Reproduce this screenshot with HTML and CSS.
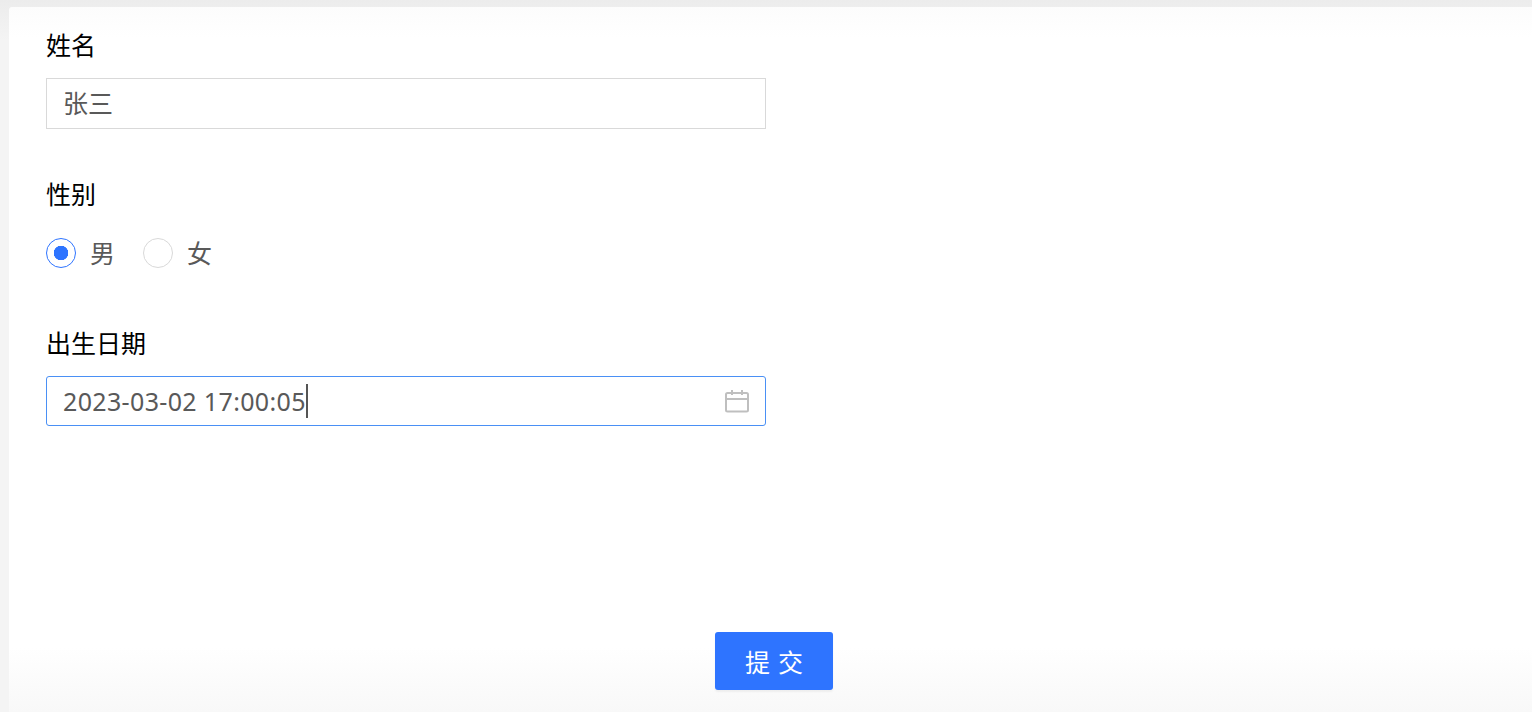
FILE: index.html
```html
<!DOCTYPE html>
<html lang="zh-CN">
<head>
    <meta charset="UTF-8">
    <meta name="viewport" content="width=device-width, initial-scale=1.0">
    <title>表单</title>
    <link rel="stylesheet" href="styles.css">
</head>
<body>
<div class="card">
    <div class="form">
        <div class="field">
            <div class="label">姓名</div>
            <div class="input input-name">张三</div>
        </div>
        <div class="field field-radio">
            <div class="label">性别</div>
            <div class="radios">
                <div class="radio radio-on"><span class="dot"></span><span class="radio-text">男</span></div>
                <div class="radio"><span class="dot"></span><span class="radio-text">女</span></div>
            </div>
        </div>
        <div class="field field-date">
            <div class="label">出生日期</div>
            <div class="input input-focus">
                <span class="value">2023-03-02 17:00:05</span><span class="caret"></span>
                <svg class="cal" width="24" height="24" viewBox="0 0 24 24" fill="none" stroke="#bfbfbf" stroke-width="2">
                    <rect x="1" y="4" width="22" height="18.5" rx="1.5"/>
                    <path d="M1 10h22M7 1v5M17 1v5"/>
                </svg>
            </div>
        </div>
    </div>
    <div class="footer">
        <button class="submit">提交</button>
    </div>
</div>
</body>
</html>
```

FILE: styles.css
```css
* {
    box-sizing: border-box;
}
html, body {
    height: 100%;
}
body {
    margin: 0;
    padding: 7px 0 0 9px;
    overflow: hidden;
    background: linear-gradient(#ececec, #f4f4f4 40px);
    font-family: "Noto Sans", "Noto Sans CJK SC", sans-serif;
    font-size: 25px;
}
.card {
    height: 705px;
    display: flex;
    flex-direction: column;
    background: linear-gradient(#fcfcfc, #fff 30px);
    border-top-left-radius: 3px;
}
.form {
    flex: 1;
    padding: 21px 0 0 37px;
}
.label {
    height: 34px;
    line-height: 34px;
    color: #000;
}
.input {
    width: 720px;
    height: 51px;
    margin-top: 16px;
    padding: 0 17px 0 16px;
    display: flex;
    align-items: center;
    border: 1px solid #d9d9d9;
    color: #595959;
}
.input-name {
    padding-bottom: 3px;
}
.field-radio {
    margin-top: 48px;
}
.radios {
    display: flex;
    gap: 28px;
    margin-top: 27px;
    color: #595959;
}
.radio {
    display: flex;
    align-items: center;
    gap: 14px;
    height: 30px;
}
.radio-text {
    margin-bottom: 3px;
}
.dot {
    width: 30px;
    height: 30px;
    border: 1px solid #d9d9d9;
    border-radius: 50%;
}
.radio-on .dot {
    border-color: #2e74ff;
    background: radial-gradient(circle, #2e74ff 0 7px, #fff 7.5px);
}
.field-date {
    margin-top: 58px;
}
.input-focus {
    height: 50px;
    border-color: #4a90f5;
    border-radius: 3px;
}
.value {
    letter-spacing: 0.35px;
}
.caret {
    width: 2px;
    height: 34px;
    background: #555;
}
.cal {
    margin-left: auto;
    margin-right: -1px;
}
.footer {
    height: 80px;
    padding: 0 0 22px 7px;
    display: flex;
    justify-content: center;
    align-items: flex-end;
    background: linear-gradient(#fff 20%, #f8f8f8);
}
.submit {
    width: 118px;
    height: 58px;
    border: 0;
    border-radius: 3px;
    background: #2e74ff;
    box-shadow: 0 2px 2px rgba(0, 0, 0, 0.05);
    color: #fff;
    font-family: inherit;
    font-size: 25px;
    letter-spacing: 8px;
    text-indent: 8px;
    padding: 0 0 1px;
}
```
